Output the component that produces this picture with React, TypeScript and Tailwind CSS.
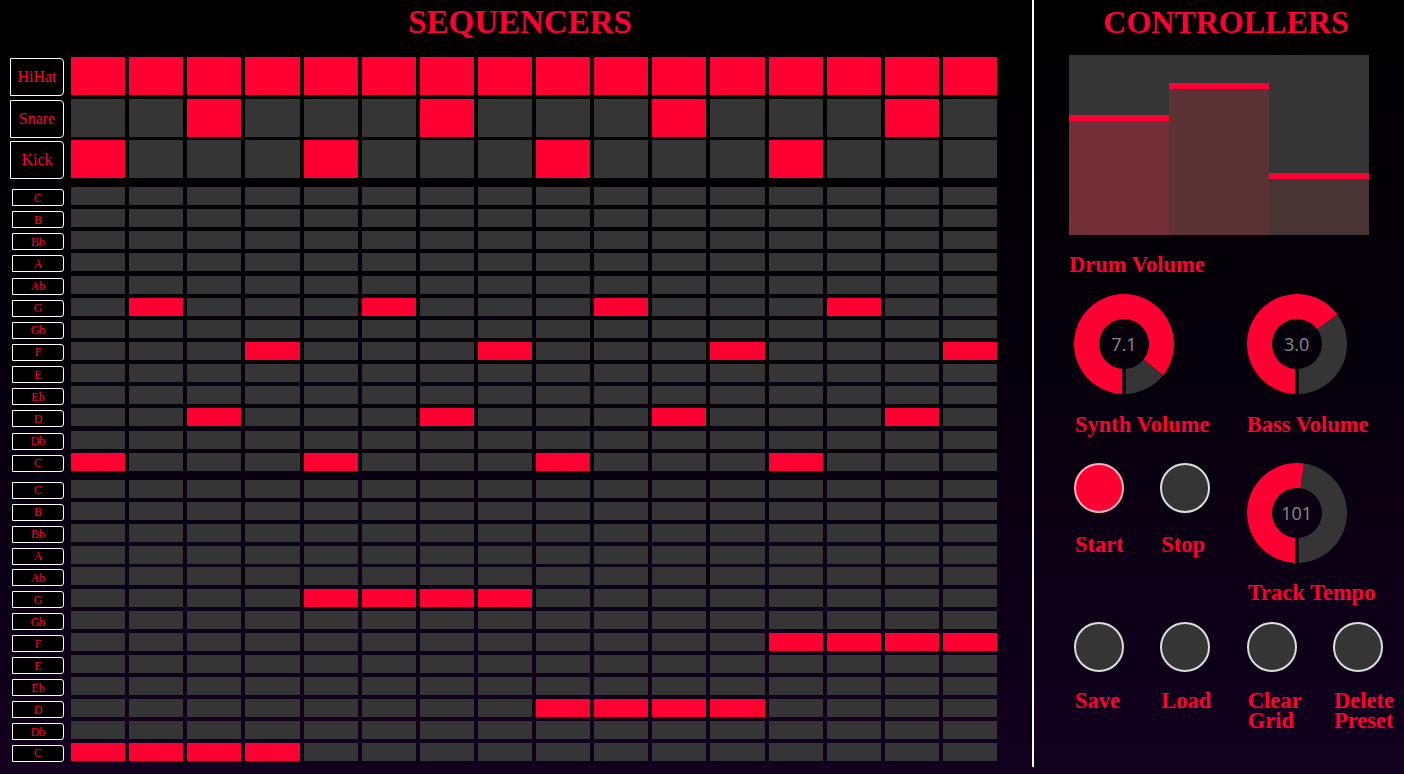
import React from "react";

const ALL = Array.from({ length: 16 }, (_, i) => i);

const drums: { name: string; on: number[] }[] = [
  { name: "HiHat", on: ALL },
  { name: "Snare", on: [2, 6, 10, 14] },
  { name: "Kick", on: [0, 4, 8, 12] },
];

const notes = ["C", "B", "Bb", "A", "Ab", "G", "Gb", "F", "E", "Eb", "D", "Db", "C"];

const synthOn: Record<number, number[]> = {
  5: [1, 5, 9, 13],
  7: [3, 7, 11, 15],
  10: [2, 6, 10, 14],
  12: [0, 4, 8, 12],
};
const bassOn: Record<number, number[]> = {
  5: [4, 5, 6, 7],
  7: [12, 13, 14, 15],
  10: [8, 9, 10, 11],
  12: [0, 1, 2, 3],
};

function Cells({ on }: { on: number[] }) {
  return (
    <div className="grid grid-cols-16 gap-x-[4px] w-[926px] h-full">
      {ALL.map((i) => (
        <div key={i} className={on.includes(i) ? "bg-[#ff0033] h-full" : "bg-[#353535] h-full"} />
      ))}
    </div>
  );
}

function NoteSection({ active, gap }: { active: Record<number, number[]>; gap: string }) {
  return (
    <div className={`flex flex-col ${gap}`}>
      {notes.map((n, r) => (
        <div key={r} className="flex h-[18px]">
          <div className="w-[54px] ml-[10px] mr-[7px] flex justify-end">
            <div className="w-[52px] h-[17px] mt-[2px] bg-black border-[1.5px] border-white rounded-r-[3px] flex items-center justify-center text-[12px] leading-none text-[#ff0033]">
              {n}
            </div>
          </div>
          <Cells on={active[r] || []} />
        </div>
      ))}
    </div>
  );
}

function pt(r: number, a: number) {
  const rad = (a * Math.PI) / 180;
  return [50 + r * Math.sin(rad), 50 - r * Math.cos(rad)];
}

function sector(a0: number, a1: number) {
  const large = a1 - a0 > 180 ? 1 : 0;
  const [x0, y0] = pt(50, a0);
  const [x1, y1] = pt(50, a1);
  const [x2, y2] = pt(25, a1);
  const [x3, y3] = pt(25, a0);
  return `M${x0} ${y0} A50 50 0 ${large} 1 ${x1} ${y1} L${x2} ${y2} A25 25 0 ${large} 0 ${x3} ${y3} Z`;
}

function Knob({ id, value, angle }: { id: string; value: string; angle: number }) {
  return (
    <div className="grid w-[100px] h-[100px]">
      <svg width="100" height="100" viewBox="0 0 100 100" className="[grid-area:1/1]">
        <defs>
          <mask id={id}>
            <rect x="0" y="0" width="100" height="100" fill="white" />
            <rect x="48.3" y="60" width="3.4" height="40" fill="black" />
          </mask>
        </defs>
        <g mask={`url(#${id})`}>
          <path d={sector(angle, 180)} fill="#353535" />
          <path d={sector(180, angle + 360)} fill="#ff0033" />
        </g>
      </svg>
      <div className="[grid-area:1/1] flex items-center justify-center font-['Open_Sans',sans-serif] text-[18px] text-[#8a8a8a] leading-none">
        {value}
      </div>
    </div>
  );
}

function Circle({ red }: { red?: boolean }) {
  return red ? (
    <div className="w-[50px] h-[50px] rounded-full bg-[#ff0033] border-[2.5px] border-[#ffb0bc]" />
  ) : (
    <div className="w-[50px] h-[50px] rounded-full bg-[#353535] border-[2.5px] border-[#dedede]" />
  );
}

const label = "text-[22.5px] font-bold leading-[21px] text-[#ff0033]";

export default function App() {
  return (
    <div className="w-[1404px] h-[774px] overflow-hidden flex bg-[linear-gradient(to_bottom,#000000_0%,#050009_40%,#12001f_100%)] font-['Liberation_Serif',serif]">
      {/* Sequencers */}
      <div className="w-[1032px] flex flex-col">
        <div className="mt-[6px] h-[32px] leading-[32px] text-[33px] font-bold text-[#ff0033] text-center pl-[8px]">
          SEQUENCERS
        </div>
        <div className="mt-[19px] flex flex-col gap-y-[3.5px]">
          {drums.map((d) => (
            <div key={d.name} className="flex h-[38px]">
              <div className="w-[54px] ml-[10px] mr-[7px]">
                <div className="w-[54px] h-[38px] mt-[1px] bg-black border-[1.5px] border-white rounded-r-[4px] flex items-center justify-center text-[16px] text-[#ff0033] leading-none">
                  {d.name}
                </div>
              </div>
              <Cells on={d.on} />
            </div>
          ))}
        </div>
        <div className="mt-[9px]">
          <NoteSection active={synthOn} gap="gap-y-[4.15px]" />
        </div>
        <div className="mt-[9px]">
          <NoteSection active={bassOn} gap="gap-y-[3.95px]" />
        </div>
      </div>

      {/* Divider */}
      <div className="w-[2px] h-[767px] bg-white" />

      {/* Controllers */}
      <div className="w-[370px] flex flex-col">
        <div className="mt-[6px] h-[32px] leading-[32px] text-[32px] font-bold text-[#ff0033] text-center pl-[14px]">
          CONTROLLERS
        </div>
        <div className="mt-[17px] ml-[35px] w-[300px] h-[180px] bg-[#353535] flex items-end">
          <div className="w-[100px] h-[120px] border-t-[6px] border-[#ff0033] bg-[#722f38]" />
          <div className="w-[100px] h-[152px] border-t-[6px] border-[#ff0033] bg-[#5c3335]" />
          <div className="w-[100px] h-[62px] border-t-[6px] border-[#ff0033] bg-[#483335]" />
        </div>
        <div className={`mt-[19px] ml-[35px] ${label}`}>Drum Volume</div>

        <div className="ml-[40px] mt-[19px] grid grid-cols-[86.33px_86.33px_86.33px_71px]">
          <div className="col-span-2 flex flex-col">
            <Knob id="k1" value="7.1" angle={128.5} />
            <div className={`mt-[20px] ml-[1px] ${label} whitespace-nowrap`}>Synth Volume</div>
          </div>
          <div className="col-span-2 flex flex-col">
            <Knob id="k2" value="3.0" angle={54} />
            <div className={`mt-[20px] ${label} whitespace-nowrap`}>Bass Volume</div>
          </div>
        </div>

        <div className="ml-[40px] mt-[28px] grid grid-cols-[86.33px_86.33px_86.33px_71px] items-start">
          <div className="flex flex-col">
            <Circle red />
            <div className={`mt-[21px] ml-[1px] ${label}`}>Start</div>
          </div>
          <div className="flex flex-col">
            <Circle />
            <div className={`mt-[21px] ml-[1px] ${label}`}>Stop</div>
          </div>
          <div className="col-span-2 flex flex-col">
            <Knob id="k3" value="101" angle={8} />
            <div className={`mt-[19px] ml-[1px] ${label} whitespace-nowrap`}>Track Tempo</div>
          </div>
        </div>

        <div className="ml-[40px] mt-[19px] grid grid-cols-[86.33px_86.33px_86.33px_71px] items-start">
          {["Save", "Load", "Clear Grid", "Delete Preset"].map((t) => (
            <div key={t} className="flex flex-col">
              <Circle />
              <div className="mt-[19px] ml-[1px] text-[22.5px] font-bold leading-[20px] text-[#ff0033]">{t}</div>
            </div>
          ))}
        </div>
      </div>
    </div>
  );
}
